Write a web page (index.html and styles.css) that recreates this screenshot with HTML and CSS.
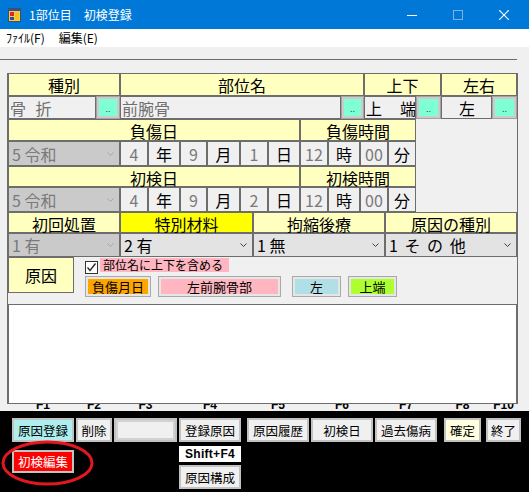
FILE: index.html
```html
<!DOCTYPE html>
<html lang="ja">
<head>
    <meta charset="UTF-8">
    <title>1部位目　初検登録</title>
    <link rel="stylesheet" href="styles.css">
</head>
<body>
    <!-- Title bar -->
    <div class="titlebar">
        <svg class="app-icon" width="13" height="14" viewBox="0 0 13 14">
            <rect x="0.5" y="0.5" width="12" height="13" fill="#f2cf4a" stroke="#4a4a6a"/>
            <rect x="1" y="1" width="11" height="2" fill="#2f4f9f"/>
            <rect x="2" y="4" width="4" height="4" fill="#d42a2a"/>
            <rect x="2" y="9" width="4" height="3" fill="#2f4f9f"/>
            <rect x="7" y="4" width="4" height="8" fill="#f6c21c"/>
        </svg>
        <span class="title">1部位目　初検登録</span>
        <div class="controls">
            <span class="ctl">
                <svg width="10" height="10" viewBox="0 0 10 10"><line x1="0" y1="5.5" x2="10" y2="5.5" stroke="#fff"/></svg>
            </span>
            <span class="ctl">
                <svg width="10" height="10" viewBox="0 0 10 10"><rect x="0.5" y="0.5" width="9" height="9" fill="none" stroke="#7fb2e6"/></svg>
            </span>
            <span class="ctl">
                <svg width="10" height="10" viewBox="0 0 10 10"><path d="M0 0 L10 10 M10 0 L0 10" stroke="#fff" stroke-width="1.1"/></svg>
            </span>
        </div>
    </div>

    <!-- Menu -->
    <div class="menubar">
        <span>ﾌｧｲﾙ(F)</span>
        <span>編集(E)</span>
    </div>
    <div class="toolstrip"></div>

    <!-- Form -->
    <div class="form">
        <div class="row row-top">
            <div class="cell hd">種別</div>
            <div class="cell hd">部位名</div>
            <div class="cell hd">上下</div>
            <div class="cell hd">左右</div>
        </div>
        <div class="row row-field">
            <div class="cell tb gray"><span class="wide">骨 折</span></div>
            <div class="pick">..</div>
            <div class="cell tb gray">前腕骨</div>
            <div class="pick">..</div>
            <div class="cell tb spaced">上　端</div>
            <div class="pick">..</div>
            <div class="cell tb center">左</div>
            <div class="pick">..</div>
        </div>

        <div class="row row-sub">
            <div class="cell hd low">負傷日</div>
            <div class="cell hd low">負傷時間</div>
        </div>
        <div class="row row-date">
            <div class="cell combo off">5 令和<svg class="chev" viewBox="0 0 7 4"><polyline points="0.5,0.5 3.5,3.5 6.5,0.5"/></svg></div>
            <div class="cell num">4</div>
            <div class="cell unit">年</div>
            <div class="cell num">9</div>
            <div class="cell unit">月</div>
            <div class="cell num">1</div>
            <div class="cell unit">日</div>
            <div class="cell num">12</div>
            <div class="cell unit">時</div>
            <div class="cell num">00</div>
            <div class="cell unit">分</div>
        </div>

        <div class="row row-sub short">
            <div class="cell hd low">初検日</div>
            <div class="cell hd low">初検時間</div>
        </div>
        <div class="row row-date">
            <div class="cell combo off">5 令和<svg class="chev" viewBox="0 0 7 4"><polyline points="0.5,0.5 3.5,3.5 6.5,0.5"/></svg></div>
            <div class="cell num">4</div>
            <div class="cell unit">年</div>
            <div class="cell num">9</div>
            <div class="cell unit">月</div>
            <div class="cell num">2</div>
            <div class="cell unit">日</div>
            <div class="cell num">12</div>
            <div class="cell unit">時</div>
            <div class="cell num">00</div>
            <div class="cell unit">分</div>
        </div>

        <div class="row row-kind">
            <div class="cell hd low">初回処置</div>
            <div class="cell hd low special">特別材料</div>
            <div class="cell hd low">拘縮後療</div>
            <div class="cell hd low">原因の種別</div>
        </div>
        <div class="row row-kind tall">
            <div class="cell combo off">1 有<svg class="chev" viewBox="0 0 7 4"><polyline points="0.5,0.5 3.5,3.5 6.5,0.5"/></svg></div>
            <div class="cell combo">2 有<svg class="chev" viewBox="0 0 7 4"><polyline points="0.5,0.5 3.5,3.5 6.5,0.5"/></svg></div>
            <div class="cell combo">1 無<svg class="chev" viewBox="0 0 7 4"><polyline points="0.5,0.5 3.5,3.5 6.5,0.5"/></svg></div>
            <div class="cell combo"><span class="spread">1 そ の 他</span><svg class="chev" viewBox="0 0 7 4"><polyline points="0.5,0.5 3.5,3.5 6.5,0.5"/></svg></div>
        </div>

        <div class="cause-row">
            <div class="cause">原因</div>
            <div class="opts">
                <label class="check">
                    <span class="box">
                        <svg width="11" height="11" viewBox="0 0 11 11"><polyline points="1.5,5.5 4,8.5 9.5,1.5" fill="none" stroke="#222" stroke-width="1.3"/></svg>
                    </span>
                    <span class="check-text">部位名に上下を含める</span>
                </label>
                <div class="tags">
                    <div class="tag orange">負傷月日</div>
                    <div class="tag pink">左前腕骨部</div>
                    <div class="tag blue">左</div>
                    <div class="tag lime">上端</div>
                </div>
            </div>
        </div>

        <div class="memo"></div>
    </div>

    <!-- Function keys -->
    <div class="fkeys">
        <div class="fk fk-1">
            <div class="fk-label"><span>F1</span></div>
            <div class="fbtn cyan">原因登録</div>
            <div class="fbtn red">初検編集</div>
        </div>
        <div class="fk fk-2">
            <div class="fk-label"><span>F2</span></div>
            <div class="fbtn">削除</div>
        </div>
        <div class="fk fk-3">
            <div class="fk-label"><span>F3</span></div>
            <div class="fbtn blank"></div>
        </div>
        <div class="fk fk-4">
            <div class="fk-label"><span>F4</span></div>
            <div class="fbtn">登録原因</div>
            <div class="shift">Shift+F4</div>
            <div class="fbtn under">原因構成</div>
        </div>
        <div class="fk fk-5">
            <div class="fk-label"><span>F5</span></div>
            <div class="fbtn">原因履歴</div>
        </div>
        <div class="fk fk-6">
            <div class="fk-label"><span>F6</span></div>
            <div class="fbtn">初検日</div>
        </div>
        <div class="fk fk-7">
            <div class="fk-label"><span>F7</span></div>
            <div class="fbtn">過去傷病</div>
        </div>
        <div class="fk fk-8">
            <div class="fk-label"><span>F8</span></div>
            <div class="fbtn yellow">確定</div>
        </div>
        <div class="fk fk-9">
            <div class="fk-label"><span>F10</span></div>
            <div class="fbtn">終了</div>
        </div>

        <svg class="mark" width="93" height="46" viewBox="0 0 93 46">
            <ellipse cx="46.5" cy="23" rx="44.5" ry="21" fill="none" stroke="#e3171f" stroke-width="3"/>
        </svg>
    </div>
</body>
</html>
```

FILE: styles.css
```css
* {
    margin: 0;
    padding: 0;
    box-sizing: border-box;
}

body {
    width: 529px;
    height: 492px;
    overflow: hidden;
    background: #f0f0f0;
    font-family: "Noto Sans CJK JP", "Noto Sans", sans-serif;
    color: #000;
}

/* Title bar */
.titlebar {
    height: 29px;
    background: #0078d7;
    color: #fff;
    display: flex;
    align-items: center;
}

.app-icon {
    margin-left: 8px;
}

.title {
    font-size: 12px;
    margin-left: 8px;
}

.controls {
    margin-left: auto;
    margin-right: 2px;
    display: flex;
    height: 29px;
}

.ctl {
    width: 46px;
    display: flex;
    align-items: center;
    justify-content: center;
}

/* Menu */
.menubar {
    height: 18px;
    background: #fff;
    display: flex;
    gap: 14px;
    padding-left: 6px;
    font-size: 12px;
    line-height: 18px;
}

.toolstrip {
    width: 517px;
    height: 13px;
    border-bottom: 1px solid #6d6d6d;
}

/* Form panel */
.form {
    width: 511px;
    margin: 13px 0 0 7px;
    border-left: 1px solid #6d6d6d;
    border-right: 1px solid #6d6d6d;
}

.row {
    display: grid;
}

.row-top {
    grid-template-columns: 112px 244px 77px 76px;
    height: 23px;
}

.row-field {
    grid-template-columns: 88px 24px 221px 23px 52px 25px 51px 25px;
    height: 23px;
}

.row-sub {
    grid-template-columns: 292px 116px;
    height: 22px;
}

.row-sub.short {
    height: 21px;
}

.row-date {
    grid-template-columns: 112px 28px 32px 27px 33px 28px 32px 28px 32px 28px 28px;
    height: 25px;
}

.row-kind {
    grid-template-columns: 112px 133px 132px 132px;
    height: 21px;
}

.row-kind.tall {
    height: 24px;
}

.cell {
    border: 1px solid #6d6d6d;
    display: flex;
    align-items: center;
    justify-content: center;
    white-space: nowrap;
    font-size: 16px;
    line-height: 1;
}

.hd {
    background: #ffffc0;
    padding-top: 1px;
}

.hd.low {
    padding-top: 2px;
}

.hd.special {
    background: #ffff00;
}

.tb {
    background: #f0f0f0;
    justify-content: flex-start;
    padding-left: 1px;
    overflow: hidden;
}

.tb.gray {
    color: #6f6f6f;
}

.tb.center {
    justify-content: center;
}

.tb.spaced {
    letter-spacing: 1px;
}

.wide {
    word-spacing: 6px;
}

.pick {
    border: 1px solid #a2a2a2;
    box-shadow: inset 0 0 0 2px #cbcbcb;
    background: #7fffd4;
    display: flex;
    align-items: flex-end;
    justify-content: center;
    font-family: "Liberation Sans", sans-serif;
    font-size: 9px;
    line-height: 1;
    padding-bottom: 4px;
    color: #1b3550;
}

.num {
    background: #f0f0f0;
    color: #7a7a7a;
}

.unit {
    background: #f0f0f0;
}

.combo {
    background: #e3e3e3;
    justify-content: space-between;
    padding: 0 5px 0 3px;
}

.combo.off {
    background: #cacaca;
    color: #7a7a7a;
}

.chev {
    width: 7px;
    height: 4px;
    fill: none;
    stroke: #404040;
    stroke-width: 1;
}

.combo.off .chev {
    stroke: #a4a4a4;
}

.spread {
    word-spacing: 3px;
}

/* Cause row */
.cause-row {
    display: flex;
    height: 47px;
}

.cause {
    width: 66px;
    height: 36px;
    border: 1px solid #6d6d6d;
    background: #ffffc0;
    display: flex;
    align-items: center;
    justify-content: center;
    font-size: 16px;
}

.opts {
    margin-left: 11px;
    padding-top: 1px;
}

.check {
    display: flex;
    align-items: center;
    height: 14px;
}

.box {
    width: 13px;
    height: 13px;
    margin-top: 4px;
    border: 1px solid #333;
    background: #fff;
    display: flex;
    align-items: center;
    justify-content: center;
}

.check-text {
    width: 129px;
    height: 14px;
    margin-left: 2px;
    padding-left: 3px;
    background: #ffb6c1;
    font-size: 12px;
    line-height: 14px;
}

.tags {
    display: flex;
    height: 21px;
    margin-top: 4px;
}

.tag {
    border: 1px solid #a9a9a9;
    box-shadow: inset 0 0 0 2px #e6e6e6;
    display: flex;
    align-items: center;
    justify-content: center;
    font-size: 13px;
}

.tag.orange {
    width: 66px;
    background: #ffa500;
}

.tag.pink {
    width: 123px;
    margin-left: 7px;
    background: #ffb6c1;
}

.tag.blue {
    width: 49px;
    margin-left: 11px;
    background: #b0e0e6;
}

.tag.lime {
    width: 49px;
    margin-left: 7px;
    background: #adff2f;
}

.memo {
    height: 100px;
    background: #fff;
    border: 1px solid #6d6d6d;
}

/* Function keys */
.fkeys {
    position: relative;
    height: 88px;
    display: flex;
    gap: 2px;
    padding-left: 12px;
    background: linear-gradient(#f0f0f0 0 7px, #000 7px);
}

.fk {
    display: flex;
    flex-direction: column;
}

.fk-1, .fk-4, .fk-5, .fk-6, .fk-7 { width: 62px; }
.fk-2 { width: 36px; }
.fk-3 { width: 63px; }
.fk-5 { margin-left: 4px; }
.fk-8 { width: 37px; margin-left: 5px; }
.fk-9 { width: 35px; margin-left: 3px; }

.fk-label {
    height: 7px;
    overflow: hidden;
    text-align: center;
}

.fk-label span {
    display: block;
    margin-top: -4px;
    font-family: "Liberation Sans", sans-serif;
    font-weight: bold;
    font-size: 12px;
    line-height: 11px;
}

.fbtn {
    height: 24px;
    margin-top: 7px;
    border: 2px solid #c2c2c2;
    background: #f0f0f0;
    display: flex;
    align-items: center;
    justify-content: center;
    font-size: 12.5px;
    white-space: nowrap;
}

.fbtn.cyan {
    background: #afeeee;
}

.fbtn.yellow {
    background: #ffffe0;
}

.fbtn.blank {
    box-shadow: inset 0 0 0 2px #d2d2d2;
}

.fbtn.red {
    height: 23px;
    margin-top: 8px;
    background: #ff0000;
    color: #fff;
}

.shift {
    height: 16px;
    margin-top: 4px;
    background: #fff;
    text-align: center;
    font-family: "Liberation Sans", sans-serif;
    font-weight: bold;
    font-size: 12px;
    line-height: 16px;
    letter-spacing: 0.3px;
}

.fbtn.under {
    margin-top: 3px;
}

.mark {
    position: absolute;
    left: 1px;
    top: 36px;
}
```
